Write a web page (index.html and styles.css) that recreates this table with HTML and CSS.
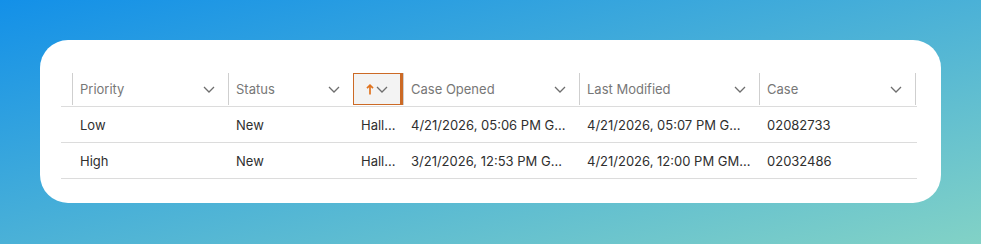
FILE: index.html
```html
<!DOCTYPE html>
<html lang="en">
<head>
  <meta charset="UTF-8">
  <meta name="viewport" content="width=device-width, initial-scale=1.0">
  <title>Cases</title>
  <link rel="stylesheet" href="styles.css">
</head>
<body>
<div class="card">
  <div class="grid">
    <div class="head-row">
      <div class="gutter"></div>
      <div class="th">
        <span>Priority</span>
        <svg class="chev" width="12" height="7" viewBox="0 0 12 7"><path d="M1 1 L6 6 L11 1"/></svg>
      </div>
      <div class="th">
        <span>Status</span>
        <svg class="chev" width="12" height="7" viewBox="0 0 12 7"><path d="M1 1 L6 6 L11 1"/></svg>
      </div>
      <div class="th sorted">
        <div class="sort-box">
          <svg class="arrow" width="8" height="11" viewBox="0 0 8 11"><path d="M4 10.5 L4 1.2 M1 4.2 L4 1.2 L7 4.2"/></svg>
          <svg class="chev" width="12" height="7" viewBox="0 0 12 7"><path d="M1 1 L6 6 L11 1"/></svg>
        </div>
      </div>
      <div class="th">
        <span>Case Opened</span>
        <svg class="chev" width="12" height="7" viewBox="0 0 12 7"><path d="M1 1 L6 6 L11 1"/></svg>
      </div>
      <div class="th">
        <span>Last Modified</span>
        <svg class="chev" width="12" height="7" viewBox="0 0 12 7"><path d="M1 1 L6 6 L11 1"/></svg>
      </div>
      <div class="th last">
        <span>Case</span>
        <svg class="chev" width="12" height="7" viewBox="0 0 12 7"><path d="M1 1 L6 6 L11 1"/></svg>
      </div>
    </div>

    <div class="row">
      <div class="gutter"></div>
      <div class="td">Low</div>
      <div class="td">New</div>
      <div class="td">Hall...</div>
      <div class="td">4/21/2026, 05:06 PM G...</div>
      <div class="td">4/21/2026, 05:07 PM G...</div>
      <div class="td">02082733</div>
    </div>
    <div class="row">
      <div class="gutter"></div>
      <div class="td">High</div>
      <div class="td">New</div>
      <div class="td">Hall...</div>
      <div class="td">3/21/2026, 12:53 PM G...</div>
      <div class="td">4/21/2026, 12:00 PM GM...</div>
      <div class="td">02032486</div>
    </div>
  </div>
</div>
</body>
</html>
```

FILE: styles.css
```css
body {
  margin: 0;
  padding: 40px;
  height: 244px;
  box-sizing: border-box;
  font-family: 'Inter', 'Noto Sans', sans-serif;
  background: linear-gradient(to bottom right, #1390e8, #82d2c6);
}
.card {
  width: 901px;
  height: 163px;
  box-sizing: border-box;
  background-color: #ffffff;
  border-radius: 28px;
  padding: 33px 24px 0 21px;
}
.head-row,
.row {
  display: grid;
  grid-template-columns: 11px 156px 125px 50px 176px 180px 157px;
}
.head-row {
  height: 33px;
  border-bottom: 1px solid #dcdcdc;
}
.row {
  height: 35px;
  border-bottom: 1px solid #dcdcdc;
}
.th {
  display: flex;
  align-items: center;
  justify-content: space-between;
  border-left: 1px solid #cfcfcf;
  padding: 0 13px 0 7px;
  font-size: 13px;
  color: #777777;
  height: 32px;
}
.th.last {
  border-right: 1px solid #cfcfcf;
  padding-right: 13px;
}
.chev path {
  fill: none;
  stroke: #6e6e6e;
  stroke-width: 1.3;
}
.th.sorted {
  border-left: none;
  padding: 0;
}
.sort-box {
  width: 100%;
  height: 32px;
  box-sizing: border-box;
  border: 1px solid #cc6a26;
  border-right-width: 3px;
  background-color: #f3f3f3;
  display: flex;
  align-items: center;
  justify-content: center;
  gap: 2px;
}
.arrow path {
  fill: none;
  stroke: #e0731f;
  stroke-width: 1.7;
}
.td {
  display: flex;
  align-items: center;
  padding-left: 8px;
  font-size: 13px;
  color: #2f2f2f;
  white-space: nowrap;
  overflow: hidden;
}
```
